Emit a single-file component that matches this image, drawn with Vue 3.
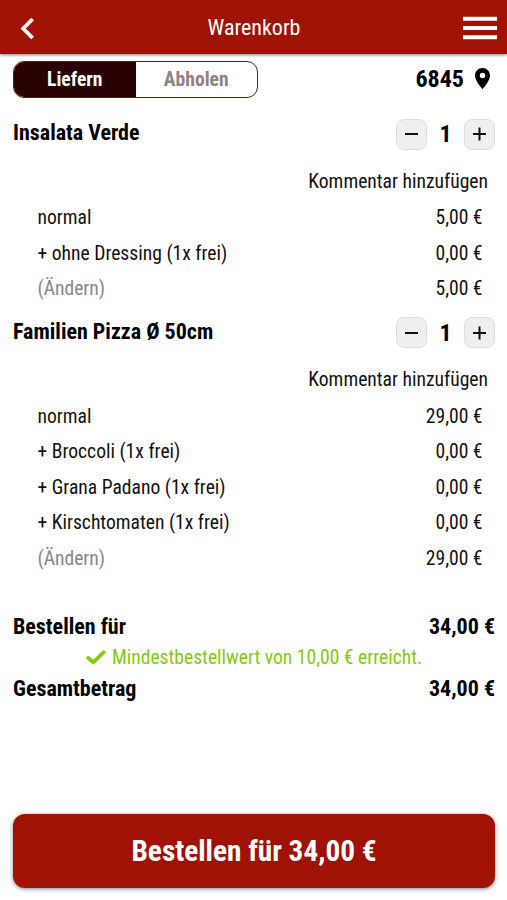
<template>
  <div class="cart">
    <header class="topbar">
      <button class="icon-btn" aria-label="Zurück">
        <svg width="15" height="23" viewBox="0 0 15 23">
          <path d="M12.6 2 L3.2 11.5 L12.6 21" fill="none" stroke="#fff" stroke-width="3.8" />
        </svg>
      </button>
      <h1 class="title"><span class="t">Warenkorb</span></h1>
      <button class="icon-btn" aria-label="Menü">
        <svg width="34" height="24" viewBox="0 0 34 24">
          <path d="M0 2.8H34M0 12H34M0 21.2H34" stroke="#fff" stroke-width="3.9" />
        </svg>
      </button>
    </header>

    <div class="options">
      <div class="switch">
        <button :class="{ active: mode === 'liefern' }" @click="mode = 'liefern'"><span class="t">Liefern</span></button>
        <button :class="{ active: mode === 'abholen' }" @click="mode = 'abholen'"><span class="t">Abholen</span></button>
      </div>
      <div class="location">
        <span class="t">6845</span>
        <svg width="15" height="21" viewBox="0 0 15 21">
          <path fill-rule="evenodd" d="M7.5 0C3.3 0 0 3.3 0 7.4C0 13 7.5 21 7.5 21S15 13 15 7.4C15 3.3 11.7 0 7.5 0ZM7.5 4.8A2.7 2.7 0 1 1 7.5 10.2A2.7 2.7 0 0 1 7.5 4.8Z" />
        </svg>
      </div>
    </div>

    <section v-for="item in items" :key="item.name" class="item">
      <div class="item-head">
        <h2><span class="t">{{ item.name }}</span></h2>
        <div class="counter">
          <button aria-label="Weniger" @click="decrease(item)">
            <svg width="14" height="14" viewBox="0 0 14 14"><path d="M0 7H13" stroke="#111" stroke-width="2" /></svg>
          </button>
          <span class="count">{{ item.count }}</span>
          <button aria-label="Mehr" @click="item.count++">
            <svg width="14" height="14" viewBox="0 0 14 14"><path d="M0 7H13M6.5 0.5V13.5" stroke="#111" stroke-width="2" /></svg>
          </button>
        </div>
      </div>
      <div class="comment"><span class="t">Kommentar hinzufügen</span></div>
      <div v-for="row in item.rows" :key="row.label" class="row">
        <span class="t">{{ row.label }}</span>
        <span class="t">{{ row.price }}</span>
      </div>
      <div class="row">
        <span class="t change">(Ändern)</span>
        <span class="t">{{ item.total }}</span>
      </div>
    </section>

    <div class="summary">
      <div class="sum-row"><span class="t">Bestellen für</span><span class="t">34,00 €</span></div>
      <div class="minimum">
        <svg width="20" height="15" viewBox="0 0 20 15">
          <path d="M2.2 8L7.2 12.3L17.8 2.2" fill="none" stroke="#84cb0c" stroke-width="3.8" stroke-linecap="round" stroke-linejoin="round" />
        </svg>
        <span class="t">Mindestbestellwert von 10,00 € erreicht.</span>
      </div>
      <div class="sum-row"><span class="t">Gesamtbetrag</span><span class="t">34,00 €</span></div>
    </div>

    <button class="order-btn"><span class="t">Bestellen für 34,00 €</span></button>
  </div>
</template>

<script setup>
import { ref } from 'vue'

const mode = ref('liefern')
const items = ref([
  {
    name: 'Insalata Verde',
    count: 1,
    total: '5,00 €',
    rows: [
      { label: 'normal', price: '5,00 €' },
      { label: '+ ohne Dressing (1x frei)', price: '0,00 €' }
    ]
  },
  {
    name: 'Familien Pizza Ø 50cm',
    count: 1,
    total: '29,00 €',
    rows: [
      { label: 'normal', price: '29,00 €' },
      { label: '+ Broccoli (1x frei)', price: '0,00 €' },
      { label: '+ Grana Padano (1x frei)', price: '0,00 €' },
      { label: '+ Kirschtomaten (1x frei)', price: '0,00 €' }
    ]
  }
])

function decrease(item) {
  if (item.count > 1) item.count--
}
</script>

<style>
body { background: #fff; }
</style>

<style scoped>
.cart {
  display: flex; flex-direction: column;
  height: 900px;
  box-sizing: border-box;
  padding-bottom: 12px;
  overflow: hidden;
  font-family: 'Roboto Condensed', Roboto, sans-serif;
  font-stretch: 75%;
  font-size: 19.6px;
  color: #111;
}
.t { white-space: nowrap; }
button {
  font: inherit; padding: 0; border: none; background: none; cursor: pointer;
  display: flex; align-items: center; justify-content: center;
}
svg { display: block; flex: none; }
h1, h2 { margin: 0; }
.topbar {
  display: flex; align-items: center; justify-content: space-between;
  height: 54px; flex: none;
  box-sizing: border-box;
  padding: 2px 10px 0 20px;
  background: #a01204;
  box-shadow: 0 1px 3px rgba(0,0,0,0.5);
}
.topbar .icon-btn { width: 34px; justify-content: flex-start; }
.title { color: #fff; font-size: 22px; font-weight: 400; padding: 0 9px 1px 0; }
.options {
  display: flex; align-items: center; justify-content: space-between;
  height: 37px; flex: none;
  margin: 7px 17px 0 13px;
}
.switch {
  display: flex;
  width: 245px; height: 37px;
  box-sizing: border-box;
  border: 1px solid #4a2220; border-radius: 11px;
  overflow: hidden;
}
.switch button { flex: 1; font-weight: 700; color: #938080; }
.switch .active { background: #280100; color: #fff; }
.location {
  display: flex; align-items: center; gap: 11px;
  font-size: 24px; font-weight: 700; color: #000;
}
.location .t { padding-bottom: 1px; }
.location svg { margin-bottom: 2px; }
.item { flex: none; padding: 17px 12px 0 13px; }
.item + .item { padding-top: 7px; }
.item-head { display: flex; align-items: center; justify-content: space-between; height: 38px; }
h2 { font-size: 22px; font-weight: 700; color: #000; padding-bottom: 3px; }
.counter { display: flex; align-items: center; }
.counter button {
  width: 31px; height: 31px;
  border: 1px solid #ddd; border-radius: 8px;
  background: #efefef;
  box-sizing: border-box;
}
.count { width: 37px; text-align: center; font-size: 24px; font-weight: 700; color: #000; }
.comment { display: flex; justify-content: flex-end; align-items: center; height: 47px; padding: 9px 7px 0 0; box-sizing: border-box; font-weight: 450; }
.row {
  display: flex; align-items: center; justify-content: space-between;
  height: 35.5px;
  padding: 0 12.5px 0 24.5px;
  font-weight: 450;
}
.change { color: #888; font-weight: 400; }
.summary { margin: 35px 12px 0 13px; }
.sum-row {
  display: flex; justify-content: space-between; align-items: center;
  height: 31px;
  font-size: 22px; font-weight: 700; color: #000;
}
.minimum {
  display: flex; align-items: center; justify-content: center; gap: 6px;
  height: 31px;
  color: #84cb0c;
}
.order-btn {
  margin: auto 12px 0 13px;
  height: 74px; flex: none;
  border-radius: 12px;
  background: #a01204; color: #fff;
  font-size: 29.3px; font-weight: 700;
  box-shadow: 0 1px 4px rgba(0,0,0,0.5);
}
.order-btn .t { padding-bottom: 1px; }
</style>
